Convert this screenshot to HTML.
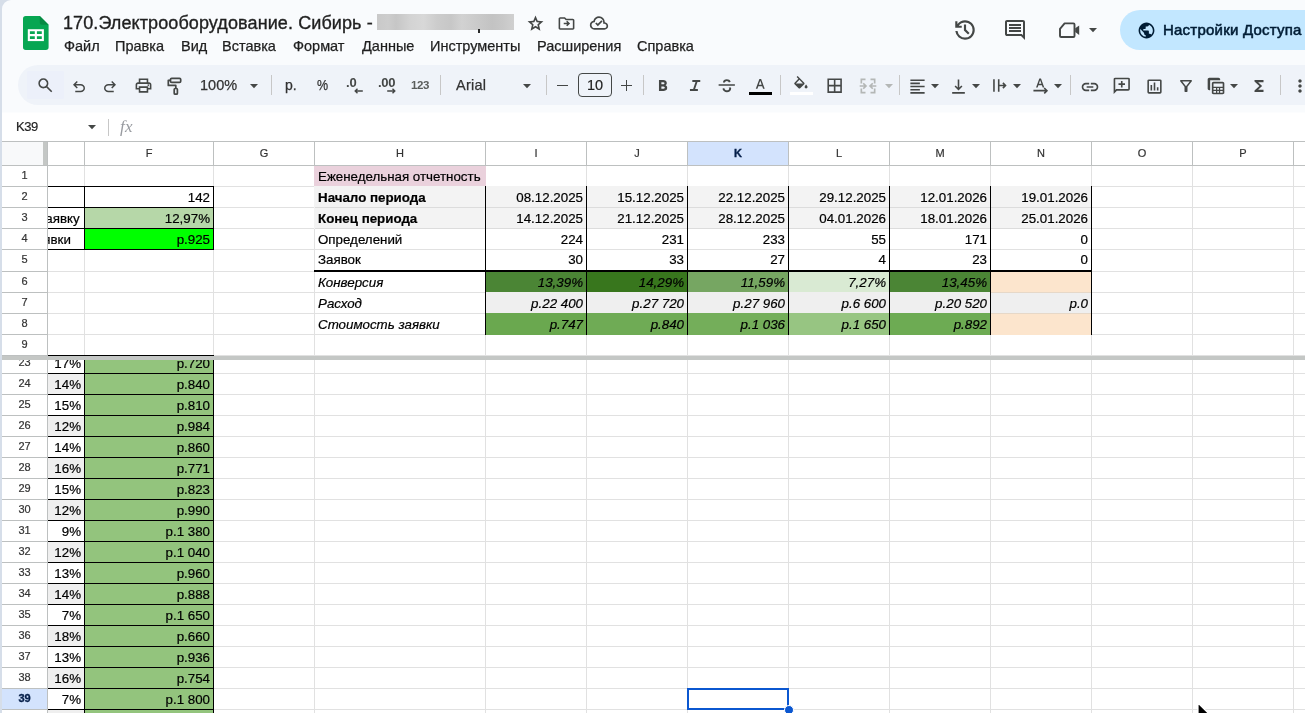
<!DOCTYPE html>
<html><head><meta charset="utf-8"><title>Sheets</title>
<style>
*{box-sizing:border-box}
html,body{margin:0;padding:0}
body{width:1305px;height:713px;overflow:hidden;position:relative;background:#d6dee9;font-family:"Liberation Sans",sans-serif;color:#000}
#app{position:absolute;left:2px;top:0;width:1303px;height:713px;background:#f9fbfd;border-top-left-radius:9px;overflow:hidden}
#wrap{position:absolute;left:-2px;top:0;width:1305px;height:713px;will-change:transform}
.abs{position:absolute}
.t{position:absolute;white-space:nowrap;line-height:1}
.cell{position:absolute;white-space:nowrap;font-size:13.33px;line-height:15px;overflow:hidden;color:#000;-webkit-text-stroke:0.2px #000}
.r{text-align:right;padding-right:3px}
.l{text-align:left;padding-left:3px}
.rn{position:absolute;left:2px;width:45px;text-align:center;font-size:11px;color:#333;line-height:11px;-webkit-text-stroke:0.2px #333}
.ch{position:absolute;top:142px;height:23px;text-align:center;font-size:11px;color:#333;line-height:23px;-webkit-text-stroke:0.2px #333}
.hl{position:absolute;height:1px;background:#e1e1e1}
.vl{position:absolute;width:1px;background:#e1e1e1}
.menu{position:absolute;top:38px;font-size:14.5px;color:#1f1f1f;line-height:16px;white-space:nowrap;-webkit-text-stroke:0.25px #1f1f1f}
svg{position:absolute;overflow:visible}
</style></head><body><div id="app"><div id="wrap">
<svg style="left:23.2px;top:16px" width="25.6" height="34" viewBox="0 0 25.6 34">
<path d="M2.800 0H16.800L25.600 8.800V31.200A2.800 2.800 0 0 1 22.800 34H2.800A2.800 2.800 0 0 1 0 31.200V2.800A2.800 2.800 0 0 1 2.800 0z" fill="#07a652"/>
<path d="M16.800 0L25.600 8.800H19A2.200 2.200 0 0 1 16.800 6.600z" fill="#078a43"/>
<path d="M4.800 13.200h16.100v11.900H4.800z" fill="#fff"/>
<path d="M6.900 15.300h4.900v2.700H6.900zM13.900 15.300h4.900v2.700h-4.900zM6.900 20.300h4.900v2.700H6.900zM13.900 20.300h4.900v2.700h-4.900z" fill="#07a652"/>
</svg>
<div class="t" id="title" style="left:63px;top:14px;font-size:18px;color:#1f1f1f;letter-spacing:0.1px;-webkit-text-stroke:0.35px #1f1f1f">170.Электрооборудование. Сибирь -</div>
<div class="abs" style="left:377px;top:14px;width:137px;height:16px;background:linear-gradient(90deg,#c9c9c9 0%,#cdcdcd 8%,#c6c6c6 14%,#d3d3d3 24%,#d8d8d8 34%,#cccccc 44%,#c7c7c7 54%,#d2d2d2 62%,#cbcbcb 72%,#c3c3c3 84%,#c8c8c8 92%,#d0d0d0 100%)"></div>
<div class="abs" style="left:478.3px;top:29px;width:1.8px;height:3.6px;background:#2a2a2a"></div>
<svg style="left:525.50px;top:13.50px" width="19" height="19" viewBox="0 0 24 24" ><path d="m8.85 16.825 3.15-1.900 3.150 1.925-.825-3.600 2.775-2.400-3.650-.325-1.450-3.400-1.450 3.375-3.650.325 2.775 2.425ZM5.825 21l1.625-7.025L2 9.250l7.200-.625L12 2l2.800 6.625 7.200.625-5.450 4.725L18.175 21 12 17.275ZM12 12.250Z" fill="#444746" /></svg>
<svg style="left:557.30px;top:13.50px" width="19" height="19" viewBox="0 0 24 24" ><path d="M4 20q-.825 0-1.412-.587Q2 18.825 2 18V6q0-.825.588-1.412Q3.175 4 4 4h6l2 2h8q.825 0 1.413.588Q22 7.175 22 8v10q0 .825-.587 1.413Q20.825 20 20 20ZM4 6v12h16V8h-8.825l-2-2H4Zm0 0v12Zm8.950 9.600 3.600-3.600-3.600-3.600-1.400 1.400 1.200 1.200H8.500v2h4.250l-1.200 1.200Z" fill="#444746" /></svg>
<svg style="left:589.00px;top:13.00px" width="20" height="20" viewBox="0 0 24 24" ><path d="M6.5 20q-2.275 0-3.887-1.575Q1 16.850 1 14.575q0-1.950 1.175-3.475Q3.350 9.575 5.250 9.150q.625-2.300 2.500-3.725Q9.625 4 12 4q2.925 0 4.962 2.037Q19 8.075 19 11q1.725.2 2.863 1.487Q23 13.775 23 15.500q0 1.875-1.312 3.188Q20.375 20 18.500 20Zm0-2h12q1.050 0 1.775-.725Q21 16.550 21 15.500q0-1.050-.725-1.775Q19.550 13 18.500 13H17v-2q0-2.075-1.463-3.538Q14.075 6 12 6 9.925 6 8.463 7.462 7 8.925 7 11h-.5q-1.450 0-2.475 1.025Q3 13.050 3 14.500q0 1.450 1.025 2.475Q5.050 18 6.500 18Zm4.100-2.200 5.650-5.650-1.400-1.400-4.250 4.250-1.750-1.750-1.400 1.400Z" fill="#444746" /></svg>
<div class="menu" id="m0" style="left:64px">Файл</div>
<div class="menu" id="m1" style="left:115px">Правка</div>
<div class="menu" id="m2" style="left:181px">Вид</div>
<div class="menu" id="m3" style="left:222px">Вставка</div>
<div class="menu" id="m4" style="left:293px">Формат</div>
<div class="menu" id="m5" style="left:362px">Данные</div>
<div class="menu" id="m6" style="left:430px">Инструменты</div>
<div class="menu" id="m7" style="left:537px">Расширения</div>
<div class="menu" id="m8" style="left:637px">Справка</div>
<svg style="left:951.80px;top:16.70px" width="26" height="26" viewBox="0 0 24 24" ><path d="M12 21q-3.450 0-6.012-2.287Q3.425 16.425 3.050 13H5.100q.350 2.600 2.313 4.300Q9.375 19 12 19q2.925 0 4.962-2.038Q19 14.925 19 12t-2.038-4.963Q14.925 5 12 5q-1.725 0-3.225.800T6.250 8H9v2H3V4h2v2.350q1.275-1.600 3.112-2.475Q9.950 3 12 3q1.875 0 3.513.712 1.637.713 2.850 1.925 1.212 1.213 1.925 2.850Q21 10.125 21 12t-.712 3.512q-.713 1.638-1.925 2.850-1.213 1.213-2.850 1.926Q13.875 21 12 21Zm2.800-4.800L11 12.400V7h2v4.600l3.200 3.200Z" fill="#444746" /></svg>
<svg style="left:1002.60px;top:17.60px" width="24" height="24" viewBox="0 0 24 24" ><path d="M6 14h12v-2H6Zm0-3h12V9H6Zm0-3h12V6H6Zm16 14-4-4H4q-.825 0-1.412-.587Q2 16.825 2 16V4q0-.825.588-1.412Q3.175 2 4 2h16q.825 0 1.413.588Q22 3.175 22 4ZM4 16h14.850L20 17.125V4H4v12Zm0 0V4v12Z" fill="#444746" /></svg>
<svg style="left:1056px;top:18px" width="28" height="24" viewBox="1056 18 28 24"><path d="M1064.600 23.400H1073.400a1.100 1.100 0 0 1 1.100 1.100V35.900a1.100 1.100 0 0 1 -1.100 1.100H1061.100a1.100 1.100 0 0 1 -1.100 -1.100V28.800Z" fill="none" stroke="#444746" stroke-width="1.9" stroke-linejoin="round"/><path d="M1075.200 28.300L1079.200 25.500V34.900L1075.200 32.100Z" fill="#444746"/></svg>
<svg style="left:1089.00px;top:28.00px" width="8" height="4.2" viewBox="0 0 8 4.2"><path d="M0 0h8L4 4.2z" fill="#444746"/></svg>
<div class="abs" style="left:1120px;top:10px;width:220px;height:40px;border-radius:20px;background:#c2e7ff"></div>
<svg style="left:1136.50px;top:20.50px" width="19" height="19" viewBox="0 0 24 24" ><path d="M12 22q-2.075 0-3.900-.788-1.825-.787-3.175-2.137-1.350-1.350-2.137-3.175Q2 14.075 2 12t.788-3.900q.787-1.825 2.137-3.175 1.350-1.350 3.175-2.138Q9.925 2 12 2t3.900.787q1.825.788 3.175 2.138 1.350 1.350 2.138 3.175Q22 9.925 22 12t-.787 3.900q-.788 1.825-2.138 3.175-1.350 1.350-3.175 2.137Q14.075 22 12 22Zm-1-2.050V18q-.825 0-1.412-.587Q9 16.825 9 16v-1l-4.800-4.800q-.075.450-.137.900Q4 11.550 4 12q0 3.025 1.988 5.300Q7.975 19.575 11 19.950Zm6.900-2.550q.5-.550.900-1.187.400-.638.663-1.325.262-.688.400-1.413Q20 12.750 20 12q0-2.450-1.362-4.475Q17.275 5.500 15 4.600V5q0 .825-.587 1.412Q13.825 7 13 7h-2v2q0 .425-.287.712Q10.425 10 10 10H8v2h6q.425 0 .713.287.287.288.287.713v3h1q.650 0 1.175.387.525.388.725 1.013Z" fill="#001d35" /></svg>
<div class="t" id="share" style="left:1163px;top:22px;font-size:15px;color:#001d35;letter-spacing:0.22px;-webkit-text-stroke:0.55px #001d35">Настройки Доступа</div>
<div class="abs" style="left:18px;top:65px;width:1330px;height:40px;border-radius:20px;background:#eff3f9"></div>
<div class="abs" style="left:27.3px;top:71px;width:37px;height:28px;border-radius:1px;background:#ecf0fa"></div>
<svg style="left:35.90px;top:75.60px" width="18.6" height="18.6" viewBox="0 0 24 24" ><path d="M19.600 21l-6.300-6.300q-.750.600-1.725.950Q10.600 16 9.500 16q-2.725 0-4.612-1.888Q3 12.225 3 9.500q0-2.725 1.888-4.613Q6.775 3 9.500 3t4.613 1.887Q16 6.775 16 9.500q0 1.100-.350 2.075-.350.975-.950 1.725l6.300 6.300ZM9.500 14q1.875 0 3.188-1.312Q14 11.375 14 9.500q0-1.875-1.312-3.188Q11.375 5 9.500 5 7.625 5 6.312 6.312 5 7.625 5 9.500q0 1.875 1.312 3.188Q7.625 14 9.500 14Z" fill="#444746" /></svg>
<svg style="left:69.70px;top:77.50px" width="18" height="18" viewBox="0 0 24 24" ><path d="M7 19v-2h7.100q1.575 0 2.737-1Q18 15 18 13.500T16.837 11Q15.675 10 14.100 10H7.800l2.600 2.600L9 14 4 9l5-5 1.400 1.400L7.800 8h6.300q2.425 0 4.163 1.575Q20 11.150 20 13.500q0 2.350-1.737 3.925Q16.525 19 14.100 19Z" fill="#444746" /></svg>
<svg style="left:101.30px;top:77.50px" width="18" height="18" viewBox="0 0 24 24" ><path d="M9.900 19q-2.425 0-4.163-1.575Q4 15.850 4 13.500q0-2.350 1.737-3.925Q7.475 8 9.900 8h6.300l-2.600-2.600L15 4l5 5-5 5-1.400-1.400 2.600-2.600H9.900q-1.575 0-2.737 1Q6 12 6 13.500T7.163 16q1.162 1 2.737 1H17v2Z" fill="#444746" /></svg>
<svg style="left:133.60px;top:76.20px" width="19" height="19" viewBox="0 0 24 24" ><path d="M16 8V5H8v3H6V3h12v5ZM4 10h16H6Zm14 2.500q.425 0 .712-.288Q19 11.925 19 11.500t-.288-.712Q18.425 10.500 18 10.500t-.712.288Q17 11.075 17 11.500t.288.712q.287.288.712.288ZM16 19v-4H8v4Zm2 2H6v-4H2v-6q0-1.275.875-2.138Q3.750 8 5 8h14q1.275 0 2.137.862Q22 9.725 22 11v6h-4Zm2-6v-4q0-.425-.288-.713Q19.425 10 19 10H5q-.425 0-.713.287Q4 10.575 4 11v4h2v-2h12v2Z" fill="#444746" /></svg>
<svg style="left:165px;top:76px" width="20" height="20" viewBox="0 0 20 20"><g fill="none" stroke="#444746" stroke-width="1.7" stroke-linejoin="round"><rect x="5.500" y="2.300" width="10.200" height="4.100" rx="1.200"/><path d="M5.500 4.300H3.300V9.400H10.800V12.400"/><rect x="9.200" y="12.500" width="3.200" height="5.700" rx="1"/></g></svg>
<div class="t" id="zoom" style="left:200px;top:78px;font-size:14.5px;color:#333;-webkit-text-stroke:0.25px #333">100%</div>
<svg style="left:249.90px;top:84.00px" width="8" height="4.2" viewBox="0 0 8 4.2"><path d="M0 0h8L4 4.2z" fill="#444746"/></svg>
<div class="abs" style="left:271px;top:75px;width:1px;height:20px;background:#c7c7c7"></div>
<div class="t" style="left:285px;top:78px;font-size:14px;color:#333;-webkit-text-stroke:0.25px #333">р.</div>
<div class="t" style="left:316.7px;top:78px;font-size:14.5px;color:#333;-webkit-text-stroke:0.25px #333;transform:scaleX(0.86);transform-origin:left">%</div>
<div class="t" style="left:346px;top:76px;font-size:13px;font-weight:bold;color:#444746">.0</div>
<svg style="left:354.3px;top:88px" width="9" height="6" viewBox="0 0 9 6"><path d="M8.800 3H1.200M3.500 0.700L1.200 3 3.500 5.300" fill="none" stroke="#444746" stroke-width="1.400"/></svg>
<div class="t" style="left:378px;top:76px;font-size:13px;font-weight:bold;color:#444746;letter-spacing:-0.3px">.00</div>
<svg style="left:386.8px;top:88px" width="9" height="6" viewBox="0 0 9 6"><path d="M0.200 3H7.800M5.500 0.700L7.800 3 5.500 5.300" fill="none" stroke="#444746" stroke-width="1.400"/></svg>
<div class="t" style="left:411px;top:79.5px;font-size:11.5px;font-weight:bold;color:#5a5d5c;letter-spacing:-0.4px">123</div>
<div class="abs" style="left:440px;top:75px;width:1px;height:20px;background:#c7c7c7"></div>
<div class="t" style="left:456px;top:78px;font-size:14.5px;color:#333;letter-spacing:0.25px;-webkit-text-stroke:0.25px #333">Arial</div>
<svg style="left:522.70px;top:84.00px" width="8" height="4.2" viewBox="0 0 8 4.2"><path d="M0 0h8L4 4.2z" fill="#444746"/></svg>
<div class="abs" style="left:546px;top:75px;width:1px;height:20px;background:#c7c7c7"></div>
<div class="abs" style="left:557px;top:84.5px;width:11px;height:1.6px;background:#444746"></div>
<div class="abs" style="left:578px;top:73px;width:34px;height:24px;border:1px solid #444746;border-radius:4px"></div>
<div class="t" style="left:578px;width:34px;text-align:center;top:78px;font-size:14.500px;color:#1f1f1f;-webkit-text-stroke:0.2px #1f1f1f">10</div>
<div class="abs" style="left:620.8px;top:84.5px;width:11px;height:1.6px;background:#444746"></div><div class="abs" style="left:625.5px;top:79.8px;width:1.6px;height:11px;background:#444746"></div>
<div class="abs" style="left:643px;top:75px;width:1px;height:20px;background:#c7c7c7"></div>
<svg style="left:652.10px;top:76.20px" width="19" height="19" viewBox="0 0 24 24" ><path d="M8.800 19V5h5.525q1.625 0 3 1 1.375 1 1.375 2.775 0 1.275-.575 1.963-.575.687-1.075.987.625.275 1.388 1.025Q19.200 13.500 19.200 15q0 2.225-1.625 3.113Q15.950 19 14.525 19Zm3.025-2.800h2.600q1.200 0 1.463-.612.262-.613.262-.888t-.262-.887q-.263-.613-1.538-.613h-2.525Zm0-5.700h2.325q.825 0 1.200-.425.375-.425.375-.950 0-.600-.425-.975t-1.100-.375h-2.375Z" fill="#444746" /></svg>
<svg style="left:685.50px;top:76.20px" width="19" height="19" viewBox="0 0 24 24" ><path d="M5 19v-2.500h4l3-9H8V5h10v2.500h-3.500l-3 9H15V19Z" fill="#444746" /></svg>
<svg style="left:717.25px;top:75.95px" width="19.5" height="19.5" viewBox="0 0 24 24" ><path d="M12.150 20q-1.900 0-3.375-1.125T6.650 15.800l2.200-.950q.350 1.200 1.213 1.975Q10.925 17.600 12.200 17.600q1.050 0 1.925-.5T15 15.500q0-.450-.175-.825-.175-.375-.475-.675h2.800q.125.350.187.713.063.362.063.787 0 2.150-1.537 3.325Q14.325 20 12.150 20ZM2 12v-2h20v2ZM12.050 3.850q1.650 0 2.888.812Q16.175 5.475 16.850 7.150l-2.200.975q-.225-.775-.863-1.350Q13.150 6.200 12.100 6.200q-.975 0-1.625.450-.650.450-.725 1.350h-2.400q.050-1.850 1.388-3 1.337-1.150 3.312-1.150Z" fill="#444746" /></svg>
<svg style="left:751.75px;top:77.05px" width="16.5" height="16.5" viewBox="0 0 24 24" ><path d="M5.500 17 10.750 3h2.500l5.250 14h-2.400l-1.250-3.600H9.200L7.900 17Zm4.400-5.600h4.200l-2.050-5.800h-.1Z" fill="#444746" /></svg>
<div class="abs" style="left:748.5px;top:91.5px;width:23px;height:3.5px;background:#000"></div>
<div class="abs" style="left:780px;top:75px;width:1px;height:20px;background:#c7c7c7"></div>
<svg style="left:791.90px;top:75.50px" width="17.8" height="17.8" viewBox="0 0 24 24" ><path d="M16.560 8.940 7.620 0 6.210 1.410l2.380 2.380-5.150 5.150a1.490 1.490 0 0 0 0 2.120l5.500 5.500c.29.290.68.440 1.060.440s.770-.150 1.060-.440l5.500-5.500c.590-.580.590-1.530 0-2.120ZM5.210 10 10 5.210 14.790 10ZM19 11.500s-2 2.170-2 3.500c0 1.100.9 2 2 2s2-.9 2-2c0-1.330-2-3.500-2-3.500Z" fill="#444746" /></svg>
<div class="abs" style="left:789.7px;top:91.5px;width:23px;height:3.5px;background:#fff"></div>
<svg style="left:824.55px;top:76.05px" width="19.3" height="19.3" viewBox="0 0 24 24" ><path d="M3 21V3h18v18Zm2-2h6v-6H5Zm8 0h6v-6h-6Zm-8-8h6V5H5Zm8 0h6V5h-6Z" fill="#444746" /></svg>
<svg style="left:858.00px;top:75.70px" width="20" height="20" viewBox="0 0 24 24" ><path d="M3 21v-6h2v4h4v2Zm12 0v-2h4v-4h2v6ZM3 9V3h6v2H5v4Zm16 0V5h-4V3h6v6ZM7 16l-1.400-1.400 1.600-1.600H2v-2h5.200L5.600 9.400 7 8l4 4Zm10 0-4-4 4-4 1.400 1.400-1.600 1.600H22v2h-5.200l1.600 1.600Z" fill="#b4b7b6" /></svg>
<svg style="left:885.00px;top:84.00px" width="8" height="4.2" viewBox="0 0 8 4.2"><path d="M0 0h8L4 4.2z" fill="#b4b7b6"/></svg>
<div class="abs" style="left:899px;top:75px;width:1px;height:20px;background:#c7c7c7"></div>
<svg style="left:907.50px;top:76.50px" width="19" height="19" viewBox="0 0 24 24" ><path d="M3 21v-2h18v2Zm0-4v-2h12v2Zm0-4v-2h18v2Zm0-4V7h12v2Zm0-4V3h18v2Z" fill="#444746" /></svg>
<svg style="left:930.60px;top:84.00px" width="8" height="4.2" viewBox="0 0 8 4.2"><path d="M0 0h8L4 4.2z" fill="#444746"/></svg>
<svg style="left:948.50px;top:76.50px" width="19" height="19" viewBox="0 0 24 24" ><path d="M4 21v-2h16v2Zm8-4-5-5 1.400-1.400 2.600 2.550V3h2v10.150l2.600-2.550L17 12Z" fill="#444746" /></svg>
<svg style="left:971.90px;top:84.00px" width="8" height="4.2" viewBox="0 0 8 4.2"><path d="M0 0h8L4 4.2z" fill="#444746"/></svg>
<svg style="left:989.50px;top:76.20px" width="19" height="19" viewBox="0 0 24 24" ><path d="M4 20V4h2v16Zm6 0V4h2v7h5.150l-1.550-1.550L17 8l4 4-4 4-1.400-1.400 1.550-1.600H12v7Z" fill="#444746" /></svg>
<svg style="left:1012.80px;top:84.00px" width="8" height="4.2" viewBox="0 0 8 4.2"><path d="M0 0h8L4 4.2z" fill="#444746"/></svg>
<svg style="left:1030.65px;top:76.25px" width="19.5" height="19.5" viewBox="0 0 24 24" ><path d="M6.200 14 10.250 3h2.050l4.050 11h-1.950l-.95-2.750h-4.350L8.150 14Zm3.500-4.400h3.150l-1.550-4.450h-.1ZM3 19v-2h14.150l-1.550-1.600L17 14l4 4-4 4-1.400-1.400 1.550-1.600Z" fill="#444746" /></svg>
<svg style="left:1053.80px;top:84.00px" width="8" height="4.2" viewBox="0 0 8 4.2"><path d="M0 0h8L4 4.2z" fill="#444746"/></svg>
<div class="abs" style="left:1070px;top:75px;width:1px;height:20px;background:#c7c7c7"></div>
<svg style="left:1080.00px;top:76.60px" width="20" height="20" viewBox="0 0 24 24" ><path d="M11 17H7q-2.075 0-3.537-1.463Q2 14.075 2 12t1.463-3.538Q4.925 7 7 7h4v2H7q-1.250 0-2.125.875T4 12q0 1.250.875 2.125T7 15h4Zm-3-4v-2h8v2Zm5 4v-2h4q1.250 0 2.125-.875T20 12q0-1.250-.875-2.125T17 9h-4V7h4q2.075 0 3.538 1.462Q22 9.925 22 12q0 2.075-1.462 3.537Q19.075 17 17 17Z" fill="#444746" /></svg>
<svg style="left:1112.25px;top:76.45px" width="19.5" height="19.5" viewBox="0 0 24 24" ><path d="M11 14h2v-3h3V9h-3V6h-2v3H8v2h3Zm-9 8V4q0-.825.588-1.412Q3.175 2 4 2h16q.825 0 1.413.588Q22 3.175 22 4v12q0 .825-.587 1.413Q20.825 18 20 18H6Zm3.150-6H20V4H4v13.125ZM4 16V4v12Z" fill="#444746" /></svg>
<svg style="left:1144.50px;top:76.80px" width="19" height="19" viewBox="0 0 24 24" ><path d="M5 21q-.825 0-1.412-.587Q3 19.825 3 19V5q0-.825.588-1.412Q4.175 3 5 3h14q.825 0 1.413.588Q21 4.175 21 5v14q0 .825-.587 1.413Q19.825 21 19 21Zm0-2h14V5H5v14Zm2-2h2v-7H7Zm4 0h2V7h-2Zm4 0h2v-4h-2ZM5 19V5v14Z" fill="#444746" /></svg>
<svg style="left:1177.00px;top:77.20px" width="18" height="18" viewBox="0 0 24 24" ><path d="M11 20q-.425 0-.712-.288Q10 19.425 10 19v-6L4.200 5.600q-.375-.500-.113-1.050Q4.350 4 5 4h14q.650 0 .913.550.262.550-.113 1.050L14 13v6q0 .425-.287.712Q13.425 20 13 20Zm1-7.700L16.950 6h-9.900Zm0 0Z" fill="#444746" /></svg>
<svg style="left:1206.00px;top:76.20px" width="20" height="20" viewBox="0 0 24 24" ><path d="M9 22q-.825 0-1.412-.587Q7 20.825 7 20V9q0-.825.588-1.412Q8.175 7 9 7h11q.825 0 1.413.588Q22 8.175 22 9v11q0 .825-.587 1.413Q20.825 22 20 22Zm0-9h11V9H9Zm4.500 3.500h2v-2h-2Zm0 3.500h2v-2h-2ZM9 16.500h3v-2H9Zm8 0h3v-2h-3ZM9 20h3v-2H9Zm8 0h3v-2h-3ZM5 17H4q-.825 0-1.412-.587Q2 15.825 2 15V4q0-.825.588-1.412Q3.175 2 4 2h11q.825 0 1.413.588Q17 3.175 17 4v1H5Z" fill="#444746" /></svg>
<svg style="left:1230.00px;top:84.00px" width="8" height="4.2" viewBox="0 0 8 4.2"><path d="M0 0h8L4 4.2z" fill="#444746"/></svg>
<svg style="left:1250.00px;top:77.20px" width="18" height="18" viewBox="0 0 24 24" ><path d="M6 20v-2l6.500-6L6 6V4h12v3h-7.150l5.300 5-5.300 5H18v3Z" fill="#444746" /></svg>
<div class="abs" style="left:1280px;top:75px;width:1px;height:20px;background:#c7c7c7"></div>
<svg style="left:1290.00px;top:75.70px" width="20" height="20" viewBox="0 0 24 24" ><path d="M12 20q-.825 0-1.412-.587Q10 18.825 10 18q0-.825.588-1.412Q11.175 16 12 16t1.413.588Q14 17.175 14 18q0 .825-.587 1.413Q12.825 20 12 20Zm0-6q-.825 0-1.412-.587Q10 12.825 10 12q0-.825.588-1.412Q11.175 10 12 10t1.413.588Q14 11.175 14 12q0 .825-.587 1.413Q12.825 14 12 14Zm0-6q-.825 0-1.412-.588Q10 6.825 10 6t.588-1.412Q11.175 4 12 4t1.413.588Q14 5.175 14 6t-.587 1.412Q12.825 8 12 8Z" fill="#444746" /></svg>
<div class="abs" style="left:2px;top:113px;width:1303px;height:28px;background:#fff"></div>
<div class="abs" style="left:2px;top:112px;width:1303px;height:1px;background:#fcfdfe"></div>
<div class="t" style="left:16px;top:120px;font-size:13px;color:#1f1f1f;letter-spacing:-0.5px;-webkit-text-stroke:0.2px #1f1f1f">K39</div>
<svg style="left:88.2px;top:125px" width="8" height="4.2" viewBox="0 0 8 4.2"><path d="M0 0h8L4 4.2z" fill="#444746"/></svg>
<div class="abs" style="left:108px;top:119px;width:1px;height:17px;background:#c7c7c7"></div>
<div class="t" style="left:120px;top:117.5px;font-size:17px;color:#989ba0;font-family:'Liberation Serif',serif;font-style:italic;letter-spacing:0.3px">fx</div>
<div class="abs" style="left:2px;top:141px;width:1303px;height:572px;background:#fff"></div>
<div class="abs" style="left:2px;top:142px;width:41px;height:23px;background:#f8f9fa"></div>
<div class="abs" style="left:688px;top:142px;width:100px;height:23px;background:#d3e3fd"></div>
<div class="abs" style="left:2px;top:689px;width:45px;height:20px;background:#d3e3fd"></div>
<div class="hl" style="left:48px;top:186px;width:1257px"></div>
<div class="hl" style="left:48px;top:207px;width:1257px"></div>
<div class="hl" style="left:48px;top:228px;width:1257px"></div>
<div class="hl" style="left:48px;top:249px;width:1257px"></div>
<div class="hl" style="left:48px;top:271px;width:1257px"></div>
<div class="hl" style="left:48px;top:292px;width:1257px"></div>
<div class="hl" style="left:48px;top:313px;width:1257px"></div>
<div class="hl" style="left:48px;top:334px;width:1257px"></div>
<div class="hl" style="left:48px;top:355px;width:1257px"></div>
<div class="hl" style="left:48px;top:373px;width:1257px"></div>
<div class="hl" style="left:48px;top:394px;width:1257px"></div>
<div class="hl" style="left:48px;top:415px;width:1257px"></div>
<div class="hl" style="left:48px;top:436px;width:1257px"></div>
<div class="hl" style="left:48px;top:457px;width:1257px"></div>
<div class="hl" style="left:48px;top:478px;width:1257px"></div>
<div class="hl" style="left:48px;top:499px;width:1257px"></div>
<div class="hl" style="left:48px;top:520px;width:1257px"></div>
<div class="hl" style="left:48px;top:541px;width:1257px"></div>
<div class="hl" style="left:48px;top:562px;width:1257px"></div>
<div class="hl" style="left:48px;top:583px;width:1257px"></div>
<div class="hl" style="left:48px;top:604px;width:1257px"></div>
<div class="hl" style="left:48px;top:625px;width:1257px"></div>
<div class="hl" style="left:48px;top:646px;width:1257px"></div>
<div class="hl" style="left:48px;top:667px;width:1257px"></div>
<div class="hl" style="left:48px;top:688px;width:1257px"></div>
<div class="hl" style="left:48px;top:709px;width:1257px"></div>
<div class="vl" style="left:84px;top:166px;height:547px"></div>
<div class="vl" style="left:213px;top:166px;height:547px"></div>
<div class="vl" style="left:314px;top:166px;height:547px"></div>
<div class="vl" style="left:485px;top:166px;height:547px"></div>
<div class="vl" style="left:586px;top:166px;height:547px"></div>
<div class="vl" style="left:687px;top:166px;height:547px"></div>
<div class="vl" style="left:788px;top:166px;height:547px"></div>
<div class="vl" style="left:889px;top:166px;height:547px"></div>
<div class="vl" style="left:990px;top:166px;height:547px"></div>
<div class="vl" style="left:1091px;top:166px;height:547px"></div>
<div class="vl" style="left:1192px;top:166px;height:547px"></div>
<div class="vl" style="left:1293px;top:166px;height:547px"></div>
<div class="abs" style="left:314px;top:165px;width:172px;height:22px;background:#ead1dc"></div>
<div class="abs" style="left:314px;top:186px;width:778px;height:22px;background:#f3f3f3"></div>
<div class="abs" style="left:314px;top:207px;width:778px;height:22px;background:#f3f3f3"></div>
<div class="hl" style="left:315px;top:207px;width:776px;background:#dcdcdc"></div>
<div class="hl" style="left:315px;top:228px;width:776px;background:#dcdcdc"></div>
<div class="abs" style="left:84px;top:207px;width:130px;height:22px;background:#b6d7a8"></div>
<div class="abs" style="left:84px;top:228px;width:130px;height:22px;background:#00ff00"></div>
<div class="abs" style="left:485px;top:272px;width:102px;height:21px;background:#4b8535"></div>
<div class="abs" style="left:586px;top:272px;width:102px;height:21px;background:#38761d"></div>
<div class="abs" style="left:687px;top:272px;width:102px;height:21px;background:#76a662"></div>
<div class="abs" style="left:788px;top:272px;width:102px;height:21px;background:#d9ead3"></div>
<div class="abs" style="left:889px;top:272px;width:102px;height:21px;background:#4b8535"></div>
<div class="abs" style="left:990px;top:272px;width:102px;height:21px;background:#fce5cd"></div>
<div class="abs" style="left:485px;top:292px;width:607px;height:22px;background:#efefef"></div>
<div class="abs" style="left:485px;top:313px;width:102px;height:22px;background:#6aa84f"></div>
<div class="abs" style="left:586px;top:313px;width:102px;height:22px;background:#6fab55"></div>
<div class="abs" style="left:687px;top:313px;width:102px;height:22px;background:#74ae5a"></div>
<div class="abs" style="left:788px;top:313px;width:102px;height:22px;background:#97c582"></div>
<div class="abs" style="left:889px;top:313px;width:102px;height:22px;background:#6dab53"></div>
<div class="abs" style="left:990px;top:313px;width:102px;height:22px;background:#fce5cd"></div>
<div class="hl" style="left:991px;top:292px;width:100px;background:#e6d8c8"></div>
<div class="hl" style="left:991px;top:313px;width:100px;background:#e6d8c8"></div>
<div class="abs" style="left:0;top:360px;width:1305px;height:353px;overflow:hidden"><div class="abs" style="left:0;top:-360px;width:1305px;height:713px"><div class="abs" style="left:84px;top:352px;width:130px;height:22px;background:#93c47d"></div></div></div>
<div class="abs" style="left:47px;top:373px;width:38px;height:22px;background:#efefef"></div>
<div class="abs" style="left:84px;top:373px;width:130px;height:22px;background:#93c47d"></div>
<div class="abs" style="left:84px;top:394px;width:130px;height:22px;background:#93c47d"></div>
<div class="abs" style="left:47px;top:415px;width:38px;height:22px;background:#efefef"></div>
<div class="abs" style="left:84px;top:415px;width:130px;height:22px;background:#93c47d"></div>
<div class="abs" style="left:84px;top:436px;width:130px;height:22px;background:#93c47d"></div>
<div class="abs" style="left:47px;top:457px;width:38px;height:22px;background:#efefef"></div>
<div class="abs" style="left:84px;top:457px;width:130px;height:22px;background:#93c47d"></div>
<div class="abs" style="left:84px;top:478px;width:130px;height:22px;background:#93c47d"></div>
<div class="abs" style="left:47px;top:499px;width:38px;height:22px;background:#efefef"></div>
<div class="abs" style="left:84px;top:499px;width:130px;height:22px;background:#93c47d"></div>
<div class="abs" style="left:84px;top:520px;width:130px;height:22px;background:#93c47d"></div>
<div class="abs" style="left:47px;top:541px;width:38px;height:22px;background:#efefef"></div>
<div class="abs" style="left:84px;top:541px;width:130px;height:22px;background:#93c47d"></div>
<div class="abs" style="left:84px;top:562px;width:130px;height:22px;background:#93c47d"></div>
<div class="abs" style="left:47px;top:583px;width:38px;height:22px;background:#efefef"></div>
<div class="abs" style="left:84px;top:583px;width:130px;height:22px;background:#93c47d"></div>
<div class="abs" style="left:84px;top:604px;width:130px;height:22px;background:#93c47d"></div>
<div class="abs" style="left:47px;top:625px;width:38px;height:22px;background:#efefef"></div>
<div class="abs" style="left:84px;top:625px;width:130px;height:22px;background:#93c47d"></div>
<div class="abs" style="left:84px;top:646px;width:130px;height:22px;background:#93c47d"></div>
<div class="abs" style="left:47px;top:667px;width:38px;height:22px;background:#efefef"></div>
<div class="abs" style="left:84px;top:667px;width:130px;height:22px;background:#93c47d"></div>
<div class="abs" style="left:84px;top:688px;width:130px;height:22px;background:#93c47d"></div>
<div class="abs" style="left:47px;top:709px;width:38px;height:22px;background:#efefef"></div>
<div class="abs" style="left:84px;top:709px;width:130px;height:22px;background:#93c47d"></div>
<div class="hl" style="left:2px;top:141px;width:1305px;background:#bdc0c0"></div>
<div class="hl" style="left:2px;top:165px;width:1305px;background:#bdc0c0"></div>
<div class="vl" style="left:84px;top:142px;height:23px;background:#bdc0c0"></div>
<div class="vl" style="left:213px;top:142px;height:23px;background:#bdc0c0"></div>
<div class="vl" style="left:314px;top:142px;height:23px;background:#bdc0c0"></div>
<div class="vl" style="left:485px;top:142px;height:23px;background:#bdc0c0"></div>
<div class="vl" style="left:586px;top:142px;height:23px;background:#bdc0c0"></div>
<div class="vl" style="left:687px;top:142px;height:23px;background:#bdc0c0"></div>
<div class="vl" style="left:788px;top:142px;height:23px;background:#bdc0c0"></div>
<div class="vl" style="left:889px;top:142px;height:23px;background:#bdc0c0"></div>
<div class="vl" style="left:990px;top:142px;height:23px;background:#bdc0c0"></div>
<div class="vl" style="left:1091px;top:142px;height:23px;background:#bdc0c0"></div>
<div class="vl" style="left:1192px;top:142px;height:23px;background:#bdc0c0"></div>
<div class="vl" style="left:1293px;top:142px;height:23px;background:#bdc0c0"></div>
<div class="vl" style="left:47px;top:142px;height:571px;background:#bdc0c0"></div>
<div class="hl" style="left:2px;top:186px;width:45px;background:#bdc0c0"></div>
<div class="hl" style="left:2px;top:207px;width:45px;background:#bdc0c0"></div>
<div class="hl" style="left:2px;top:228px;width:45px;background:#bdc0c0"></div>
<div class="hl" style="left:2px;top:249px;width:45px;background:#bdc0c0"></div>
<div class="hl" style="left:2px;top:271px;width:45px;background:#bdc0c0"></div>
<div class="hl" style="left:2px;top:292px;width:45px;background:#bdc0c0"></div>
<div class="hl" style="left:2px;top:313px;width:45px;background:#bdc0c0"></div>
<div class="hl" style="left:2px;top:334px;width:45px;background:#bdc0c0"></div>
<div class="hl" style="left:2px;top:355px;width:45px;background:#bdc0c0"></div>
<div class="hl" style="left:2px;top:373px;width:45px;background:#bdc0c0"></div>
<div class="hl" style="left:2px;top:394px;width:45px;background:#bdc0c0"></div>
<div class="hl" style="left:2px;top:415px;width:45px;background:#bdc0c0"></div>
<div class="hl" style="left:2px;top:436px;width:45px;background:#bdc0c0"></div>
<div class="hl" style="left:2px;top:457px;width:45px;background:#bdc0c0"></div>
<div class="hl" style="left:2px;top:478px;width:45px;background:#bdc0c0"></div>
<div class="hl" style="left:2px;top:499px;width:45px;background:#bdc0c0"></div>
<div class="hl" style="left:2px;top:520px;width:45px;background:#bdc0c0"></div>
<div class="hl" style="left:2px;top:541px;width:45px;background:#bdc0c0"></div>
<div class="hl" style="left:2px;top:562px;width:45px;background:#bdc0c0"></div>
<div class="hl" style="left:2px;top:583px;width:45px;background:#bdc0c0"></div>
<div class="hl" style="left:2px;top:604px;width:45px;background:#bdc0c0"></div>
<div class="hl" style="left:2px;top:625px;width:45px;background:#bdc0c0"></div>
<div class="hl" style="left:2px;top:646px;width:45px;background:#bdc0c0"></div>
<div class="hl" style="left:2px;top:667px;width:45px;background:#bdc0c0"></div>
<div class="hl" style="left:2px;top:688px;width:45px;background:#bdc0c0"></div>
<div class="hl" style="left:2px;top:709px;width:45px;background:#bdc0c0"></div>
<div class="abs" style="left:48px;top:186px;width:166px;height:1px;background:#000"></div>
<div class="abs" style="left:48px;top:207px;width:166px;height:1px;background:#000"></div>
<div class="abs" style="left:48px;top:228px;width:166px;height:1px;background:#000"></div>
<div class="abs" style="left:48px;top:249px;width:166px;height:1px;background:#000"></div>
<div class="abs" style="left:84px;top:186px;width:1px;height:64px;background:#000"></div>
<div class="abs" style="left:213px;top:186px;width:1px;height:64px;background:#000"></div>
<div class="abs" style="left:485px;top:186px;width:1px;height:149px;background:#000"></div>
<div class="abs" style="left:586px;top:186px;width:1px;height:149px;background:#000"></div>
<div class="abs" style="left:687px;top:186px;width:1px;height:149px;background:#000"></div>
<div class="abs" style="left:788px;top:186px;width:1px;height:149px;background:#000"></div>
<div class="abs" style="left:889px;top:186px;width:1px;height:149px;background:#000"></div>
<div class="abs" style="left:990px;top:186px;width:1px;height:149px;background:#000"></div>
<div class="abs" style="left:1091px;top:186px;width:1px;height:149px;background:#000"></div>
<div class="abs" style="left:314px;top:270px;width:778px;height:2px;background:#000"></div>
<div class="abs" style="left:48px;top:355px;width:166px;height:1px;background:#000"></div>
<div class="abs" style="left:48px;top:373px;width:166px;height:1px;background:#000"></div>
<div class="abs" style="left:48px;top:394px;width:166px;height:1px;background:#000"></div>
<div class="abs" style="left:48px;top:415px;width:166px;height:1px;background:#000"></div>
<div class="abs" style="left:48px;top:436px;width:166px;height:1px;background:#000"></div>
<div class="abs" style="left:48px;top:457px;width:166px;height:1px;background:#000"></div>
<div class="abs" style="left:48px;top:478px;width:166px;height:1px;background:#000"></div>
<div class="abs" style="left:48px;top:499px;width:166px;height:1px;background:#000"></div>
<div class="abs" style="left:48px;top:520px;width:166px;height:1px;background:#000"></div>
<div class="abs" style="left:48px;top:541px;width:166px;height:1px;background:#000"></div>
<div class="abs" style="left:48px;top:562px;width:166px;height:1px;background:#000"></div>
<div class="abs" style="left:48px;top:583px;width:166px;height:1px;background:#000"></div>
<div class="abs" style="left:48px;top:604px;width:166px;height:1px;background:#000"></div>
<div class="abs" style="left:48px;top:625px;width:166px;height:1px;background:#000"></div>
<div class="abs" style="left:48px;top:646px;width:166px;height:1px;background:#000"></div>
<div class="abs" style="left:48px;top:667px;width:166px;height:1px;background:#000"></div>
<div class="abs" style="left:48px;top:688px;width:166px;height:1px;background:#000"></div>
<div class="abs" style="left:48px;top:709px;width:166px;height:1px;background:#000"></div>
<div class="abs" style="left:84px;top:360px;width:1px;height:353px;background:#000"></div>
<div class="abs" style="left:213px;top:360px;width:1px;height:353px;background:#000"></div>
<div class="abs" style="left:43px;top:142px;width:4px;height:23px;background:#c4c7c5"></div>
<div class="abs" style="left:2px;top:356px;width:1305px;height:4px;background:#c4c7c5"></div>
<div class="abs" style="left:687px;top:688px;width:102px;height:22px;border:2px solid #0b57d0"></div>
<div class="abs" style="left:784px;top:704.7px;width:10px;height:10px;border-radius:50%;background:#0b57d0;border:1px solid #fff"></div>
<svg style="left:1197px;top:701.5px" width="16" height="22" viewBox="-1 -1 16 22"><path d="M0 0V17L4 13.200 6.600 19.200 9.100 18.100 6.600 12.200H12.200Z" fill="#000" stroke="#fff" stroke-width="1.200" stroke-linejoin="round"/></svg>
<div class="ch" style="left:85px;width:128px;">F</div>
<div class="ch" style="left:214px;width:100px;">G</div>
<div class="ch" style="left:315px;width:170px;">H</div>
<div class="ch" style="left:486px;width:100px;">I</div>
<div class="ch" style="left:587px;width:100px;">J</div>
<div class="ch" style="left:688px;width:100px;font-weight:bold;color:#041e49;-webkit-text-stroke:0.35px #041e49">K</div>
<div class="ch" style="left:789px;width:100px;">L</div>
<div class="ch" style="left:890px;width:100px;">M</div>
<div class="ch" style="left:991px;width:100px;">N</div>
<div class="ch" style="left:1092px;width:100px;">O</div>
<div class="ch" style="left:1193px;width:100px;">P</div>
<div class="rn" style="top:170px;">1</div>
<div class="rn" style="top:191px;">2</div>
<div class="rn" style="top:212px;">3</div>
<div class="rn" style="top:233px;">4</div>
<div class="rn" style="top:254px;">5</div>
<div class="rn" style="top:276px;">6</div>
<div class="rn" style="top:297px;">7</div>
<div class="rn" style="top:318px;">8</div>
<div class="rn" style="top:339px;">9</div>
<div class="abs" style="left:0;top:360px;width:1305px;height:353px;overflow:hidden"><div class="abs" style="left:0;top:-360px;width:1305px;height:713px"><div class="rn" style="top:357px;">23</div></div></div>
<div class="rn" style="top:378px;">24</div>
<div class="rn" style="top:399px;">25</div>
<div class="rn" style="top:420px;">26</div>
<div class="rn" style="top:441px;">27</div>
<div class="rn" style="top:462px;">28</div>
<div class="rn" style="top:483px;">29</div>
<div class="rn" style="top:504px;">30</div>
<div class="rn" style="top:525px;">31</div>
<div class="rn" style="top:546px;">32</div>
<div class="rn" style="top:567px;">33</div>
<div class="rn" style="top:588px;">34</div>
<div class="rn" style="top:609px;">35</div>
<div class="rn" style="top:630px;">36</div>
<div class="rn" style="top:651px;">37</div>
<div class="rn" style="top:672px;">38</div>
<div class="rn" style="top:693px;font-weight:bold;color:#041e49;-webkit-text-stroke:0.35px #041e49">39</div>
<div class="rn" style="top:714px;">40</div>
<div class="cell r" style="left:85px;top:190px;width:128px;">142</div>
<div class="cell r" style="left:85px;top:211px;width:128px;">12,97%</div>
<div class="cell r" style="left:85px;top:232px;width:128px;">р.925</div>
<div class="abs" style="left:48px;top:208px;width:36px;height:20px;overflow:hidden"><div class="cell" style="right:4.400000000000006px;top:3px;overflow:visible">заявку</div></div>
<div class="abs" style="left:48px;top:229px;width:36px;height:20px;overflow:hidden"><div class="cell" style="right:13.099999999999994px;top:3px;overflow:visible">заявки</div></div>
<div class="cell l" style="left:315px;top:169px;width:170px;">Еженедельная отчетность</div>
<div class="cell l" style="left:315px;top:190px;width:170px;font-weight:bold">Начало периода</div>
<div class="cell l" style="left:315px;top:211px;width:170px;font-weight:bold">Конец периода</div>
<div class="cell l" style="left:315px;top:232px;width:170px;">Определений</div>
<div class="cell l" style="left:315px;top:252px;width:170px;">Заявок</div>
<div class="cell l" style="left:315px;top:275px;width:170px;font-style:italic">Конверсия</div>
<div class="cell l" style="left:315px;top:296px;width:170px;font-style:italic">Расход</div>
<div class="cell l" style="left:315px;top:317px;width:170px;font-style:italic">Стоимость заявки</div>
<div class="cell r" style="left:486px;top:190px;width:100px;">08.12.2025</div>
<div class="cell r" style="left:587px;top:190px;width:100px;">15.12.2025</div>
<div class="cell r" style="left:688px;top:190px;width:100px;">22.12.2025</div>
<div class="cell r" style="left:789px;top:190px;width:100px;">29.12.2025</div>
<div class="cell r" style="left:890px;top:190px;width:100px;">12.01.2026</div>
<div class="cell r" style="left:991px;top:190px;width:100px;">19.01.2026</div>
<div class="cell r" style="left:486px;top:211px;width:100px;">14.12.2025</div>
<div class="cell r" style="left:587px;top:211px;width:100px;">21.12.2025</div>
<div class="cell r" style="left:688px;top:211px;width:100px;">28.12.2025</div>
<div class="cell r" style="left:789px;top:211px;width:100px;">04.01.2026</div>
<div class="cell r" style="left:890px;top:211px;width:100px;">18.01.2026</div>
<div class="cell r" style="left:991px;top:211px;width:100px;">25.01.2026</div>
<div class="cell r" style="left:486px;top:232px;width:100px;">224</div>
<div class="cell r" style="left:587px;top:232px;width:100px;">231</div>
<div class="cell r" style="left:688px;top:232px;width:100px;">233</div>
<div class="cell r" style="left:789px;top:232px;width:100px;">55</div>
<div class="cell r" style="left:890px;top:232px;width:100px;">171</div>
<div class="cell r" style="left:991px;top:232px;width:100px;">0</div>
<div class="cell r" style="left:486px;top:252px;width:100px;">30</div>
<div class="cell r" style="left:587px;top:252px;width:100px;">33</div>
<div class="cell r" style="left:688px;top:252px;width:100px;">27</div>
<div class="cell r" style="left:789px;top:252px;width:100px;">4</div>
<div class="cell r" style="left:890px;top:252px;width:100px;">23</div>
<div class="cell r" style="left:991px;top:252px;width:100px;">0</div>
<div class="cell r" style="left:486px;top:275px;width:100px;font-style:italic">13,39%</div>
<div class="cell r" style="left:587px;top:275px;width:100px;font-style:italic">14,29%</div>
<div class="cell r" style="left:688px;top:275px;width:100px;font-style:italic">11,59%</div>
<div class="cell r" style="left:789px;top:275px;width:100px;font-style:italic">7,27%</div>
<div class="cell r" style="left:890px;top:275px;width:100px;font-style:italic">13,45%</div>
<div class="cell r" style="left:486px;top:296px;width:100px;font-style:italic">р.22 400</div>
<div class="cell r" style="left:587px;top:296px;width:100px;font-style:italic">р.27 720</div>
<div class="cell r" style="left:688px;top:296px;width:100px;font-style:italic">р.27 960</div>
<div class="cell r" style="left:789px;top:296px;width:100px;font-style:italic">р.6 600</div>
<div class="cell r" style="left:890px;top:296px;width:100px;font-style:italic">р.20 520</div>
<div class="cell r" style="left:991px;top:296px;width:100px;font-style:italic">р.0</div>
<div class="cell r" style="left:486px;top:317px;width:100px;font-style:italic">р.747</div>
<div class="cell r" style="left:587px;top:317px;width:100px;font-style:italic">р.840</div>
<div class="cell r" style="left:688px;top:317px;width:100px;font-style:italic">р.1 036</div>
<div class="cell r" style="left:789px;top:317px;width:100px;font-style:italic">р.1 650</div>
<div class="cell r" style="left:890px;top:317px;width:100px;font-style:italic">р.892</div>
<div class="abs" style="left:0;top:360px;width:1305px;height:353px;overflow:hidden"><div class="abs" style="left:0;top:-360px;width:1305px;height:713px"><div class="cell r" style="left:48px;top:356px;width:36px;">17%</div></div></div>
<div class="abs" style="left:0;top:360px;width:1305px;height:353px;overflow:hidden"><div class="abs" style="left:0;top:-360px;width:1305px;height:713px"><div class="cell r" style="left:85px;top:356px;width:128px;">р.720</div></div></div>
<div class="cell r" style="left:48px;top:377px;width:36px;">14%</div>
<div class="cell r" style="left:85px;top:377px;width:128px;">р.840</div>
<div class="cell r" style="left:48px;top:398px;width:36px;">15%</div>
<div class="cell r" style="left:85px;top:398px;width:128px;">р.810</div>
<div class="cell r" style="left:48px;top:419px;width:36px;">12%</div>
<div class="cell r" style="left:85px;top:419px;width:128px;">р.984</div>
<div class="cell r" style="left:48px;top:440px;width:36px;">14%</div>
<div class="cell r" style="left:85px;top:440px;width:128px;">р.860</div>
<div class="cell r" style="left:48px;top:461px;width:36px;">16%</div>
<div class="cell r" style="left:85px;top:461px;width:128px;">р.771</div>
<div class="cell r" style="left:48px;top:482px;width:36px;">15%</div>
<div class="cell r" style="left:85px;top:482px;width:128px;">р.823</div>
<div class="cell r" style="left:48px;top:503px;width:36px;">12%</div>
<div class="cell r" style="left:85px;top:503px;width:128px;">р.990</div>
<div class="cell r" style="left:48px;top:524px;width:36px;">9%</div>
<div class="cell r" style="left:85px;top:524px;width:128px;">р.1 380</div>
<div class="cell r" style="left:48px;top:545px;width:36px;">12%</div>
<div class="cell r" style="left:85px;top:545px;width:128px;">р.1 040</div>
<div class="cell r" style="left:48px;top:566px;width:36px;">13%</div>
<div class="cell r" style="left:85px;top:566px;width:128px;">р.960</div>
<div class="cell r" style="left:48px;top:587px;width:36px;">14%</div>
<div class="cell r" style="left:85px;top:587px;width:128px;">р.888</div>
<div class="cell r" style="left:48px;top:608px;width:36px;">7%</div>
<div class="cell r" style="left:85px;top:608px;width:128px;">р.1 650</div>
<div class="cell r" style="left:48px;top:629px;width:36px;">18%</div>
<div class="cell r" style="left:85px;top:629px;width:128px;">р.660</div>
<div class="cell r" style="left:48px;top:650px;width:36px;">13%</div>
<div class="cell r" style="left:85px;top:650px;width:128px;">р.936</div>
<div class="cell r" style="left:48px;top:671px;width:36px;">16%</div>
<div class="cell r" style="left:85px;top:671px;width:128px;">р.754</div>
<div class="cell r" style="left:48px;top:692px;width:36px;">7%</div>
<div class="cell r" style="left:85px;top:692px;width:128px;">р.1 800</div>
</div></div></body></html>
